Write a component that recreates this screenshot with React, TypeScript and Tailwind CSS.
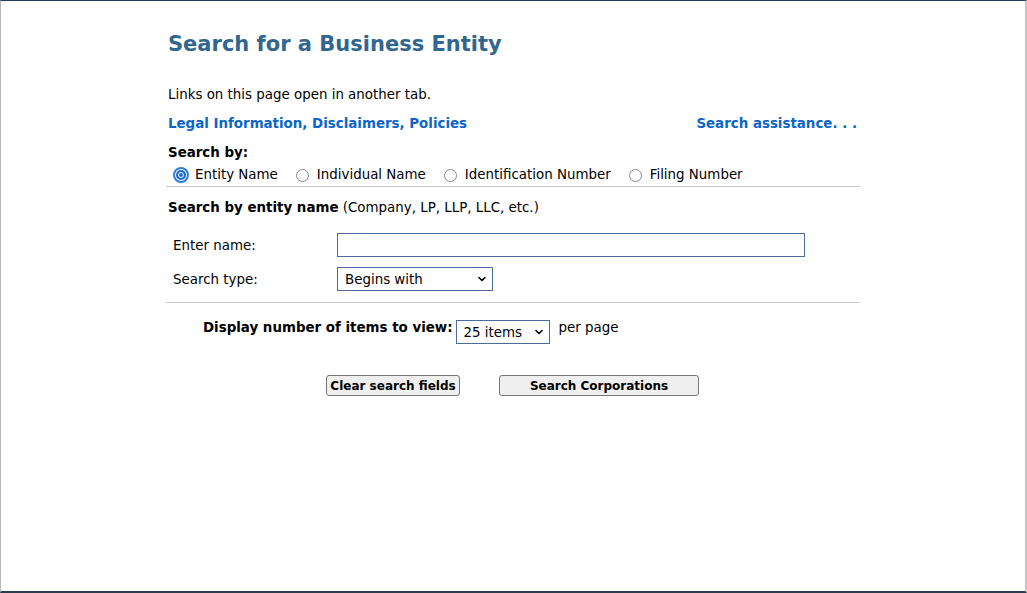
import { ChevronDown } from "lucide-react";

const font = { fontFamily: '"DejaVu Sans", Verdana, sans-serif' };

const searchOptions = [
  { label: "Entity Name", checked: true },
  { label: "Individual Name", checked: false },
  { label: "Identification Number", checked: false },
  { label: "Filing Number", checked: false },
];

function Radio({ checked }: { checked: boolean }) {
  if (checked) {
    return (
      <span className="flex h-4 w-4 items-center justify-center rounded-full border-2 border-[#2f7de1] bg-white">
        <span className="flex h-[10px] w-[10px] items-center justify-center rounded-full bg-[#1a6ad6]">
          <span className="h-[6px] w-[6px] rounded-full border border-white bg-[#1a6ad6]" />
        </span>
      </span>
    );
  }
  return (
    <span className="flex h-4 w-4 items-center justify-center">
      <span className="h-[13px] w-[13px] rounded-full border border-[#8a8a8a] bg-white" />
    </span>
  );
}

function FakeSelect({ value, className }: { value: string; className: string }) {
  return (
    <div
      className={`relative flex h-6 items-center border border-[#4a6d9a] bg-white pl-[7px] pt-[1px] text-[13.4px] text-black ${className}`}
    >
      <span>{value}</span>
      <ChevronDown size={12} strokeWidth={3.2} className="absolute right-[4px] top-[5px] text-black" />
    </div>
  );
}

export default function App() {
  return (
    <div
      style={font}
      className="h-[593px] w-[1027px] overflow-hidden border-t border-r-2 border-b-2 border-l border-t-[#1e3a5f] border-r-[#c4c4c4] border-b-[#2d3a4a] border-l-[#b8b8b8] bg-white text-[13.4px] leading-4 text-black"
    >
      <div className="ml-[165px] w-[694px] pt-[30px]">
        <h1 className="pl-[2px] text-[21px] leading-[26px] font-bold text-[#31668f]">Search for a Business Entity</h1>

        <p className="mt-[30px] pl-[2px]">Links on this page open in another tab.</p>

        <div className="mt-[13px] flex justify-between pr-[3px] pl-[2px] font-bold text-[#0b66c8]">
          <a href="#">Legal Information, Disclaimers, Policies</a>
          <a href="#">Search assistance. . .</a>
        </div>

        <p className="mt-[13px] pl-[2px] font-bold">Search by:</p>

        <div className="mt-[4px] flex h-5 items-center pl-[7px]">
          {searchOptions.map((o) => (
            <label key={o.label} className="mr-[17px] flex items-center">
              <Radio checked={o.checked} />
              <span className="ml-[6px]">{o.label}</span>
            </label>
          ))}
        </div>

        <div className="mt-[1px] h-px bg-[#c8c8c8]" />

        <p className="mt-[13px] pl-[2px]">
          <span className="font-bold">Search by entity name</span> (Company, LP, LLP, LLC, etc.)
        </p>

        <div className="mt-[17px] flex h-6 items-center pl-[7px]">
          <span className="w-[164px] pt-[1px]">Enter name:</span>
          <input type="text" className="h-6 w-[468px] border border-[#4a6d9a] bg-white outline-none" />
        </div>

        <div className="mt-[10px] flex h-6 items-center pl-[7px]">
          <span className="w-[164px] pt-[1px]">Search type:</span>
          <FakeSelect value="Begins with" className="w-[156px]" />
        </div>

        <div className="mt-[11px] h-px bg-[#c8c8c8]" />

        <div className="mt-[17px] flex items-start pl-[37px]">
          <span className="font-bold">Display number of items to view:</span>
          <FakeSelect value="25 items" className="ml-[3px] w-[94px]" />
          <span className="ml-[9px]">per page</span>
        </div>

        <div className="mt-[31px] flex pl-[160px]">
          <button
            type="button"
            className="h-[21px] w-[134px] rounded-[3px] border border-[#767676] bg-[#efefef] px-0 text-[12px] font-bold whitespace-nowrap"
          >
            Clear search fields
          </button>
          <button
            type="button"
            className="ml-[39px] h-[21px] w-[200px] rounded-[3px] border border-[#767676] bg-[#efefef] px-0 text-[12px] font-bold whitespace-nowrap"
          >
            Search Corporations
          </button>
        </div>
      </div>
    </div>
  );
}
